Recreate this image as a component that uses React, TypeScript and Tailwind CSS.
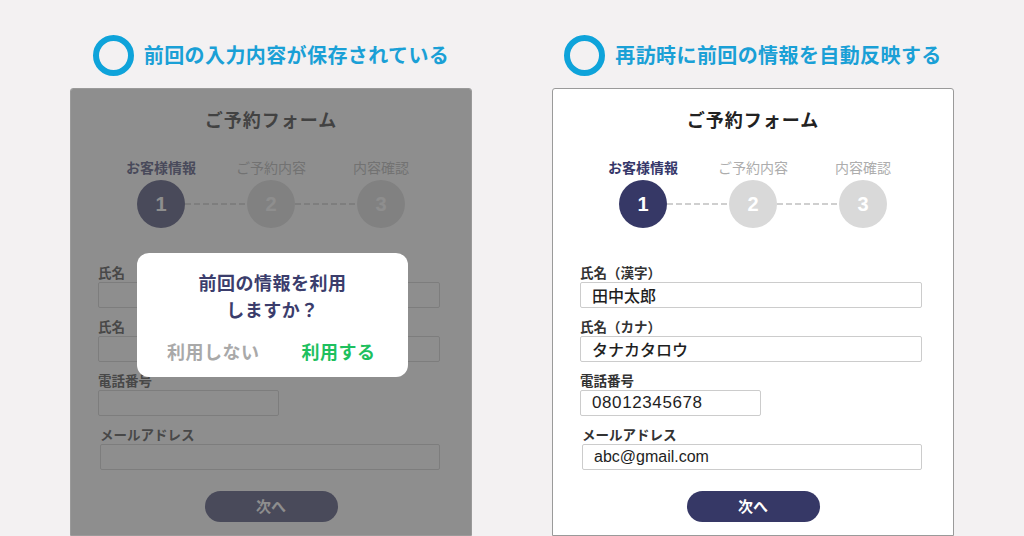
import React from "react";

const FONT = '"Noto Sans CJK JP", "Noto Sans", "Liberation Sans", sans-serif';
const LATIN = '"Liberation Sans", "Noto Sans CJK JP", sans-serif';

function Header({ text }: { text: string }) {
  return (
    <div className="h-[88px] pt-[35px] flex justify-center">
      <div className="flex items-center h-[40px] gap-[10px]">
        <div className="w-[41px] h-[41px] rounded-full border-[6px] border-[#0ea3da]" />
        <span className="text-[20px] font-bold text-[#1aa0d6] tracking-[0.4px] leading-[40px]">{text}</span>
      </div>
    </div>
  );
}

function Dash() {
  return <div className="w-[62px] h-[1.5px] bg-[repeating-linear-gradient(90deg,#cfcfcf_0px,#cfcfcf_6px,transparent_6px,transparent_9px)]" />;
}

function Steps() {
  const labels = ["お客様情報", "ご予約内容", "内容確認"];
  return (
    <div className="flex flex-col items-center mt-[25px]">
      <div className="flex">
        {labels.map((l, i) => (
          <div
            key={l}
            className={
              "w-[110px] text-center text-[14px] leading-[20px] " +
              (i === 0 ? "text-[#36386a] font-bold" : "text-[#adadad]")
            }
          >
            {l}
          </div>
        ))}
      </div>
      <div className="flex items-center mt-[3px]">
        <div className="w-[48px] h-[48px] rounded-full bg-[#363866] flex items-center justify-center text-white text-[20px] font-bold" style={{ fontFamily: LATIN }}>1</div>
        <Dash />
        <div className="w-[48px] h-[48px] rounded-full bg-[#d9d9d9] flex items-center justify-center text-white text-[20px] font-bold" style={{ fontFamily: LATIN }}>2</div>
        <Dash />
        <div className="w-[48px] h-[48px] rounded-full bg-[#d9d9d9] flex items-center justify-center text-white text-[20px] font-bold" style={{ fontFamily: LATIN }}>3</div>
      </div>
    </div>
  );
}

function Field({
  label,
  value,
  w,
  kind,
  shift,
}: {
  label: string;
  value?: string;
  w: string;
  kind: "jp" | "tel" | "mail";
  shift?: boolean;
}) {
  const textCls =
    kind === "jp" ? "text-[16px] font-medium" : kind === "tel" ? "text-[17px] tracking-[0.6px]" : "text-[16px]";
  return (
    <div className={"flex flex-col " + (shift ? "ml-[2px]" : "")}>
      <div className="h-[18px] leading-[18px] text-[13.5px] font-bold text-[#333]">{label}</div>
      <div
        className={
          w +
          " h-[26px] mt-[1px] border border-[#cccccc] rounded-[2px] bg-white pl-[11px] flex items-center text-[#1e1e1e] " +
          textCls
        }
        style={kind !== "jp" ? { fontFamily: LATIN } : undefined}
      >
        {value}
      </div>
    </div>
  );
}

function Form({ filled }: { filled: boolean }) {
  return (
    <div className="flex flex-col pt-[17px]">
      <div className="h-[26px] leading-[26px] text-center text-[18px] tracking-[1px] font-bold text-[#222]">ご予約フォーム</div>
      <Steps />
      <div className="flex flex-col gap-[9px] mt-[35px] pl-[27px] pr-[31px]">
        <Field label={filled ? "氏名（漢字）" : "氏名"} value={filled ? "田中太郎" : ""} w="w-full" kind="jp" />
        <Field label={filled ? "氏名（カナ）" : "氏名"} value={filled ? "タナカタロウ" : ""} w="w-full" kind="jp" />
        <Field label="電話番号" value={filled ? "08012345678" : ""} w="w-[181px]" kind="tel" />
        <Field label="メールアドレス" value={filled ? "abc@gmail.com" : ""} w="w-full" kind="mail" shift />
      </div>
      <div className="flex justify-center mt-[21px]">
        <div className="w-[133px] h-[31px] rounded-full bg-[#363866] text-white text-[15px] font-bold flex items-center justify-center">次へ</div>
      </div>
    </div>
  );
}

export default function App() {
  return (
    <div
      className="w-[1024px] h-[536px] overflow-hidden bg-[#f3f1f2] flex px-[70px] gap-[80px]"
      style={{ fontFamily: FONT }}
    >
      <div className="w-[402px] flex flex-col">
        <Header text="前回の入力内容が保存されている" />
        <div className="relative flex-1 bg-white border border-[#9a9a9a] rounded-t-[3px] overflow-hidden">
          <Form filled={false} />
          <div className="absolute inset-0 bg-[rgba(84,84,84,0.66)]" />
          <div className="absolute left-[66px] top-[164px] w-[271px] h-[124px] bg-white rounded-[12px] flex flex-col pt-[16px]">
            <div className="text-center text-[18px] leading-[27px] font-bold text-[#3b3d6c] tracking-[0.5px]">
              前回の情報を利用
              <br />
              しますか？
            </div>
            <div className="flex mt-[15px] ml-[30px] gap-[42px] text-[18px] leading-[27px] font-bold tracking-[0.5px]">
              <span className="text-[#a9a9a9]">利用しない</span>
              <span className="text-[#1ec05e]">利用する</span>
            </div>
          </div>
        </div>
      </div>
      <div className="w-[402px] flex flex-col">
        <Header text="再訪時に前回の情報を自動反映する" />
        <div className="relative flex-1 bg-white border border-[#9a9a9a] rounded-t-[3px] overflow-hidden">
          <Form filled />
        </div>
      </div>
    </div>
  );
}
